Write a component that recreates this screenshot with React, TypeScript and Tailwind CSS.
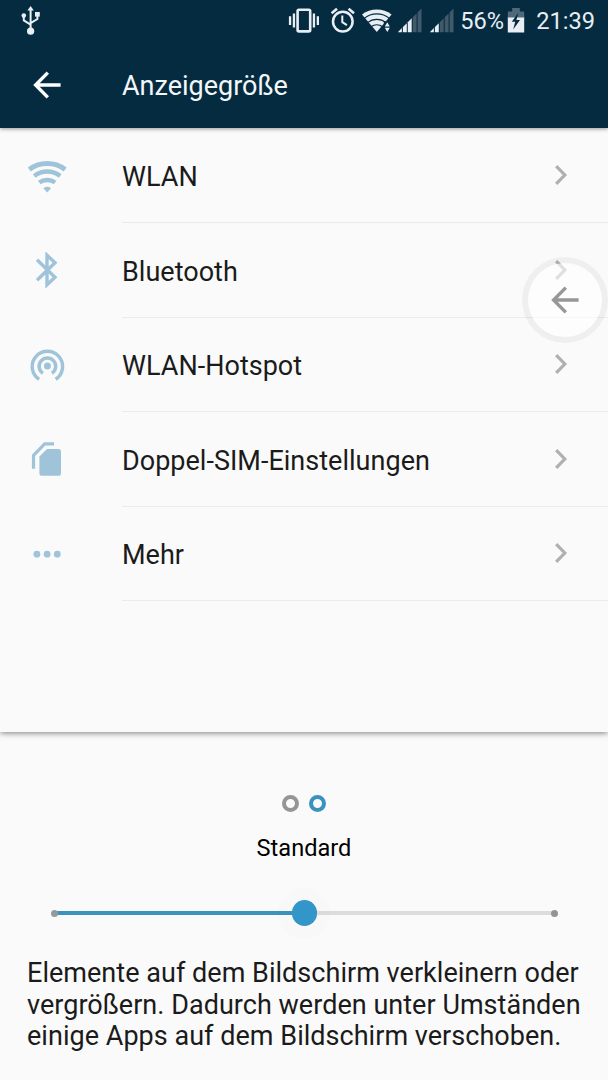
import type { ReactNode } from "react";

type SettingsItem = {
  title: string;
  icon: ReactNode;
};

const WifiIcon = () => (
  <svg className="h-[34px] w-[40px]" viewBox="27 158 40 34" fill="none" stroke="#9fc4da">
    <path d="M29.3 168.4a30 30 0 0 1 35.8 0" strokeWidth="5" />
    <path d="M34.2 174.9a21.6 21.6 0 0 1 26 0" strokeWidth="4.4" />
    <path d="M39.3 181.6a13.2 13.2 0 0 1 15.8 0" strokeWidth="4.4" />
    <path d="M43.4 187.2q3.8-2.7 7.6 0l-3.8 4.4z" fill="#9fc4da" stroke="none" />
  </svg>
);

const BluetoothIcon = () => (
  <svg
    className="h-[36px] w-[24px]"
    viewBox="35 252 24 36"
    fill="none"
    stroke="#9fc4da"
    strokeWidth="3.4"
  >
    <path d="M37 259.8l18 17.4-8 7.6V255.2l8 7.6-18 17.4" />
  </svg>
);

const HotspotIcon = () => (
  <svg
    className="h-[36px] w-[36px]"
    viewBox="29 347 36 36"
    fill="none"
    stroke="#9fc4da"
    strokeWidth="3.4"
  >
    <path d="M39.2 379.3a15.2 15.2 0 1 1 16.4 0" />
    <path d="M42.9 373.2a8.3 8.3 0 1 1 9 0" />
    <circle cx="47.4" cy="366" r="3.5" fill="#9fc4da" stroke="none" />
  </svg>
);

const SimIcon = () => (
  <svg className="h-[36px] w-[32px]" viewBox="31 441 32 36" fill="none">
    <path d="M33.5 468.8v-13.3l11.2-11.6H54" stroke="#9fc4da" strokeWidth="3.2" />
    <path
      d="M47 449h11.4a2.6 2.6 0 0 1 2.6 2.6v21.6a2.6 2.6 0 0 1-2.6 2.6H42a2.6 2.6 0 0 1-2.6-2.6v-16.6z"
      fill="#9fc4da"
    />
  </svg>
);

const MoreIcon = () => (
  <svg className="h-[8px] w-[28px]" viewBox="0 0 28 8" fill="#9fc4da">
    <circle cx="3.9" cy="4.2" r="3.4" />
    <circle cx="14.1" cy="4.2" r="3.4" />
    <circle cx="24.3" cy="4.2" r="3.4" />
  </svg>
);

const items: SettingsItem[] = [
  { title: "WLAN", icon: <WifiIcon /> },
  { title: "Bluetooth", icon: <BluetoothIcon /> },
  { title: "WLAN-Hotspot", icon: <HotspotIcon /> },
  { title: "Doppel-SIM-Einstellungen", icon: <SimIcon /> },
  { title: "Mehr", icon: <MoreIcon /> },
];

const ChevronRight = () => (
  <svg
    className="h-[20px] w-[14px]"
    viewBox="0 0 14 20"
    fill="none"
    stroke="#b0b0b0"
    strokeWidth="3.2"
  >
    <path d="M2.2 1.2l8.6 8.8-8.6 8.8" />
  </svg>
);

const ArrowLeft = ({ className }: { className: string }) => (
  <svg className={className} viewBox="0 0 28 28" fill="none" stroke="currentColor" strokeWidth="3.4">
    <path d="M27.6 14H3M14.8 1.6L2.6 14l12.2 12.4" />
  </svg>
);

const UsbIcon = () => (
  <svg className="h-[32px] w-[22px]" viewBox="20 4 22 32" fill="none" stroke="#e8eef3" strokeWidth="2">
    <path d="M30.6 8v23M23.8 16v4.4l6.8 4.2M37.4 14v5l-6.8 4.2" />
    <path d="M30.6 6l3.2 4.4h-6.4z" fill="#e8eef3" stroke="none" />
    <circle cx="23.8" cy="15.6" r="2.3" fill="#e8eef3" stroke="none" />
    <path d="M35 12h4.8v4.6H35z" fill="#e8eef3" stroke="none" />
    <circle cx="30.6" cy="31.2" r="3.6" fill="#e8eef3" stroke="none" />
  </svg>
);

const VibrateIcon = () => (
  <svg className="h-[32px] w-[32px]" viewBox="288 4 32 32" fill="#e8eef3">
    <rect x="297.6" y="9.8" width="12.6" height="21.6" rx="1.4" fill="none" stroke="#e8eef3" strokeWidth="2.6" />
    <path d="M292.8 13.4h2.3v14.2h-2.3zM288.9 16.3h2.3v8.6h-2.3zM312.8 13.4h2.3v14.2h-2.3zM316.7 16.3h2.3v8.6h-2.3z" />
  </svg>
);

const AlarmIcon = () => (
  <svg
    className="ml-[10px] h-[32px] w-[26px]"
    viewBox="330 4 26 32"
    fill="none"
    stroke="#e8eef3"
    strokeWidth="2.5"
  >
    <circle cx="342.8" cy="21.6" r="9.8" />
    <path d="M342.3 15.6v6.6l4.6 3" strokeWidth="2" />
    <path d="M331.6 13.3l5.4-4.6M354 13.3l-5.4-4.6" strokeWidth="2.6" />
  </svg>
);

const StatusWifiIcon = () => (
  <svg className="ml-[5px] h-[32px] w-[32px]" viewBox="361 4 32 32">
    <path d="M362 14.4a24.5 24.5 0 0 1 29.6 0L376.8 32z" fill="#e8eef3" />
    <path
      d="M364 18.6a20 20 0 0 1 25.6 0M367.6 22.6a14.8 14.8 0 0 1 18.4 0M371 26.8a9.6 9.6 0 0 1 11.6 0"
      fill="none"
      stroke="#042b40"
      strokeWidth="1.2"
    />
    <path d="M383.8 21.4h8.2v12h-8.2z" fill="#042b40" />
    <path d="M387.3 22.2l2.5 4.2h-5zM387.3 32l2.5-4.2h-5z" fill="#e8eef3" />
  </svg>
);

// Five slanted bars; `level` of them are lit.
const SignalIcon = ({ level, className }: { level: number; className: string }) => (
  <svg className={className} viewBox="0 0 25 32">
    {[0, 1, 2, 3, 4].map((bar) => {
      const left = bar * 4.9;
      const right = left + 3.9;
      return (
        <path
          key={bar}
          d={`M${left} 28.2V${28 - left}L${right} ${28 - right}V28.2z`}
          fill={bar < level ? "#e8eef3" : "#40596b"}
        />
      );
    })}
  </svg>
);

const BatteryIcon = () => (
  <svg className="h-[32px] w-[18px]" viewBox="507 4 18 32">
    <path d="M512.2 8h7.6v3.4h4.4V19h-16.4v-7.6h4.4z" fill="#50697a" />
    <path d="M507.8 17.4h16.4v15h-16.4z" fill="#e8eef3" />
    <path d="M518.4 12.6l-6.6 9.2h3.4l-2 7.6 6.8-9.4h-3.6z" fill="#042b40" />
  </svg>
);

const StatusBar = () => (
  <div className="flex h-10 items-center pl-5 pr-[13px] text-[23.6px] text-[#e8eef3]">
    <UsbIcon />
    <div className="ml-auto flex items-center">
      <VibrateIcon />
      <AlarmIcon />
      <StatusWifiIcon />
      <SignalIcon level={3} className="ml-[5px] h-[32px] w-[25px]" />
      <SignalIcon level={2} className="ml-[7px] h-[32px] w-[25px]" />
      <span className="ml-[5px] w-[44px] whitespace-nowrap pt-[4px]">56%</span>
      <span className="ml-[3px]">
        <BatteryIcon />
      </span>
      <span className="ml-[11px] whitespace-nowrap pt-[4px]">21:39</span>
    </div>
  </div>
);

const SettingsRow = ({ title, icon }: SettingsItem) => (
  <li className="flex h-[94.5px]">
    <div className="flex w-[94px] items-center justify-center">{icon}</div>
    <div className="ml-[28px] flex flex-1 items-center justify-between border-b border-[#ebebeb] pr-[40px]">
      <span className="pt-[4px] text-[27px] tracking-[0.02px] text-[#1b1b1b]">{title}</span>
      <ChevronRight />
    </div>
  </li>
);

const FloatingBackButton = () => (
  <button className="absolute left-[522px] top-[257px] flex h-[86px] w-[86px] items-center justify-center rounded-full border-[6.5px] border-black/[0.045] bg-white/60 bg-clip-padding">
    <ArrowLeft className="h-[28px] w-[28px] text-[#979797]" />
  </button>
);

const SizeSlider = () => (
  <div className="ml-[51px] mr-[50.5px] flex h-[52px] items-center">
    <span className="z-10 h-[7px] w-[7px] rounded-full bg-[#949a9c]" />
    <span className="-ml-1 h-[4px] flex-1 bg-[#3c93bb]" />
    <span className="relative z-10 -mx-[18px] flex h-[52px] w-[52px] items-center justify-center rounded-full bg-black/[0.008]">
      <span className="h-[25.5px] w-[25.5px] rounded-full bg-[#3396c8]" />
    </span>
    <span className="h-[4px] flex-1 bg-[#dcdcdc]" />
    <span className="-ml-1 h-[7px] w-[7px] rounded-full bg-[#949494]" />
  </div>
);

export default function App() {
  return (
    <div className="relative flex h-[1080px] w-[608px] flex-col overflow-hidden bg-[#fafafa] font-['Roboto',sans-serif]">
      <header className="relative h-[128px] bg-[#042b40] shadow-[0_1px_4px_rgba(0,0,0,0.4)]">
        <StatusBar />
        <div className="flex h-[88px] items-center pl-[33px]">
          <ArrowLeft className="mt-[1px] h-[28px] w-[28px] text-white" />
          <h1 className="ml-[61px] pt-[5px] text-[27px] text-[#f3f7f9]">Anzeigegröße</h1>
        </div>
      </header>

      <ul className="h-[604px] pt-[0.5px] shadow-[0_1px_6px_rgba(0,0,0,0.5)]">
        {items.map((item) => (
          <SettingsRow key={item.title} {...item} />
        ))}
      </ul>

      <section className="flex flex-1 flex-col">
        <div className="mt-[63px] flex justify-center gap-[10px]">
          <span className="h-[17px] w-[17px] rounded-full border-[4px] border-[#959595]" />
          <span className="h-[17px] w-[17px] rounded-full border-[4px] border-[#3a92bf]" />
        </div>
        <p className="mt-[20px] text-center text-[23.6px] leading-[32px] text-black">Standard</p>
        <div className="mt-[23px]">
          <SizeSlider />
        </div>
        <p className="ml-[27px] mt-[19px] whitespace-nowrap text-[27px] leading-[31.7px] tracking-[0.03px] text-[#1b1b1b]">
          Elemente auf dem Bildschirm verkleinern oder
          <br />
          vergrößern. Dadurch werden unter Umständen
          <br />
          einige Apps auf dem Bildschirm verschoben.
        </p>
      </section>

      <FloatingBackButton />
    </div>
  );
}
